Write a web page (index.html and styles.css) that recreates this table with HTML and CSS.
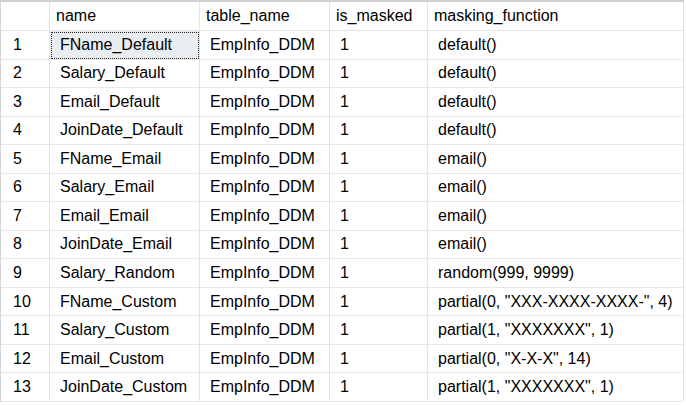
FILE: index.html
```html
<!DOCTYPE html>
<html>
<head>
<meta charset="utf-8">
<link rel="stylesheet" href="styles.css">
</head>
<body>
<div class="grid">
  <div class="hdr rn"></div>
  <div class="hdr">name</div>
  <div class="hdr">table_name</div>
  <div class="hdr">is_masked</div>
  <div class="hdr">masking_function</div>

  <div class="cell rn">1</div><div class="cell sel">FName_Default</div><div class="cell">EmpInfo_DDM</div><div class="cell">1</div><div class="cell">default()</div>
  <div class="cell rn">2</div><div class="cell">Salary_Default</div><div class="cell">EmpInfo_DDM</div><div class="cell">1</div><div class="cell">default()</div>
  <div class="cell rn">3</div><div class="cell">Email_Default</div><div class="cell">EmpInfo_DDM</div><div class="cell">1</div><div class="cell">default()</div>
  <div class="cell rn">4</div><div class="cell">JoinDate_Default</div><div class="cell">EmpInfo_DDM</div><div class="cell">1</div><div class="cell">default()</div>
  <div class="cell rn">5</div><div class="cell">FName_Email</div><div class="cell">EmpInfo_DDM</div><div class="cell">1</div><div class="cell">email()</div>
  <div class="cell rn">6</div><div class="cell">Salary_Email</div><div class="cell">EmpInfo_DDM</div><div class="cell">1</div><div class="cell">email()</div>
  <div class="cell rn">7</div><div class="cell">Email_Email</div><div class="cell">EmpInfo_DDM</div><div class="cell">1</div><div class="cell">email()</div>
  <div class="cell rn">8</div><div class="cell">JoinDate_Email</div><div class="cell">EmpInfo_DDM</div><div class="cell">1</div><div class="cell">email()</div>
  <div class="cell rn">9</div><div class="cell">Salary_Random</div><div class="cell">EmpInfo_DDM</div><div class="cell">1</div><div class="cell">random(999, 9999)</div>
  <div class="cell rn">10</div><div class="cell">FName_Custom</div><div class="cell">EmpInfo_DDM</div><div class="cell">1</div><div class="cell">partial(0, "XXX-XXXX-XXXX-", 4)</div>
  <div class="cell rn">11</div><div class="cell">Salary_Custom</div><div class="cell">EmpInfo_DDM</div><div class="cell">1</div><div class="cell">partial(1, "XXXXXXX", 1)</div>
  <div class="cell rn">12</div><div class="cell">Email_Custom</div><div class="cell">EmpInfo_DDM</div><div class="cell">1</div><div class="cell">partial(0, "X-X-X", 14)</div>
  <div class="cell rn">13</div><div class="cell">JoinDate_Custom</div><div class="cell">EmpInfo_DDM</div><div class="cell">1</div><div class="cell">partial(1, "XXXXXXX", 1)</div>
</div>
</body>
</html>
```
FILE: styles.css
```css
html, body {
  margin: 0;
  padding: 0;
  background: #ffffff;
}
body {
  font-family: "Liberation Sans", Arial, sans-serif;
  font-size: 16px;
  color: #000000;
}
.grid {
  display: grid;
  grid-template-columns: 49px 150px 130px 98px 256px;
  grid-template-rows: 29px repeat(13, 28.54px);
  width: 683px;
  border-top: 2px solid #cfcfd6;
  border-left: 1px solid #d4d4d4;
}
.hdr, .cell {
  box-sizing: border-box;
  border-right: 1px solid #e3e3e3;
  border-bottom: 1px solid #e8e8e8;
  display: flex;
  align-items: center;
  white-space: nowrap;
  overflow: hidden;
}
.hdr {
  padding-left: 6px;
  padding-bottom: 1px;
  border-bottom-color: #e3e3e3;
}
.cell {
  padding-left: 10px;
}
.cell.rn {
  padding-left: 12px;
}
.cell.sel {
  background: #e8edf2;
  outline: 1px dotted #222;
  outline-offset: -2px;
}
```
